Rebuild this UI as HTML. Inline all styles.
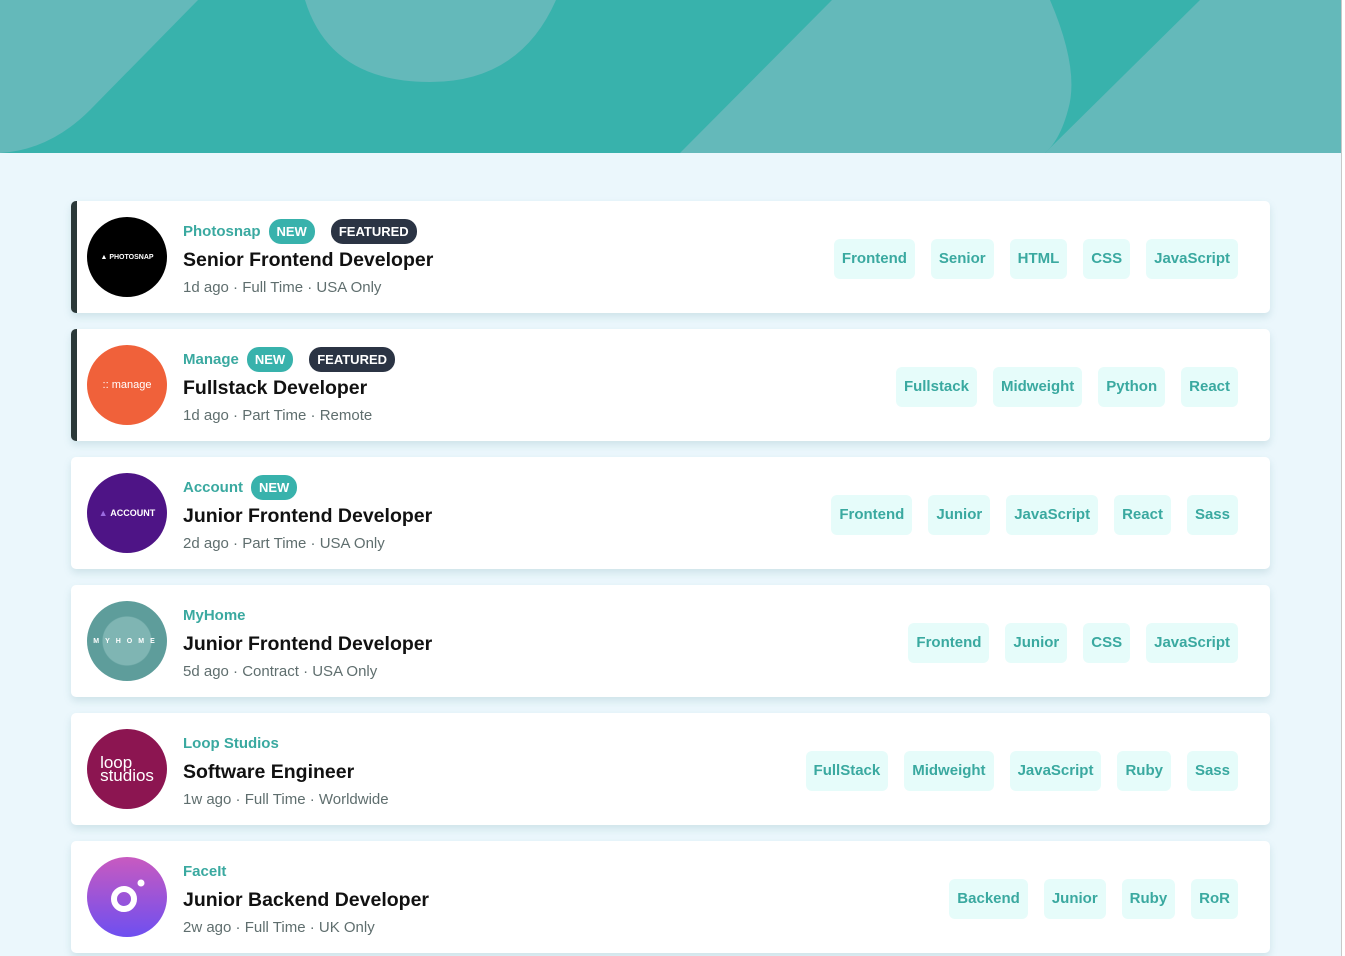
<!DOCTYPE html>
<html><head><meta charset="utf-8"><style>
*{margin:0;padding:0;box-sizing:border-box}
body{width:1345px;height:956px;overflow:hidden;background:#ebf7fc;font-family:"Liberation Sans",sans-serif;position:relative}
.hdr{position:absolute;left:0;top:0;width:1341px;height:153px;background:#38b2ac;overflow:hidden}
.sb{position:absolute;right:0;top:0;width:4px;height:956px;background:#fff;border-left:1px solid #c8c8c8}
.card{position:absolute;left:71px;width:1199px;height:112px;background:#fff;border-radius:5px;box-shadow:0 4px 8px rgba(80,140,150,.18)}
.card.f{border-left:6px solid #2b3939}
.logo{position:absolute;left:16px;top:16px;width:80px;height:80px;border-radius:50%;display:flex;align-items:center;justify-content:center;color:#fff;font-weight:bold}
.f .logo{left:10px}
.info{position:absolute;left:112px;top:18px}
.f .info{left:106px}
.co{color:#3aa9a0;font-weight:bold;font-size:15px;display:flex;align-items:center;height:24px}
.b{display:inline-block;border-radius:12px;color:#fff;font-size:13px;font-weight:bold;height:25px;line-height:25px;padding:0 8px;margin-left:8px}
.new{background:#38b2ac}.feat{background:#2b3444;margin-left:16px}
.ti{font-size:19.5px;font-weight:bold;color:#111;margin-top:6px;height:26px}
.me{font-size:15px;color:#5f6e6e;margin-top:4px}
.tags{position:absolute;right:32px;top:38px;display:flex;gap:16px}
.tags span{background:#e6fcfa;color:#3aa9a0;font-weight:bold;font-size:15px;height:40px;line-height:40px;padding:0 8px;border-radius:6px}
</style></head><body>
<div class="hdr"><svg width="1341" height="153" viewBox="0 0 1341 153">
<path d="M0 0H198L90 110Q50 150 0 153Z" fill="#64b9ba"/>
<path d="M305 0H556Q520 82 430 82Q330 82 305 0Z" fill="#64b9ba"/>
<path d="M832 0H1050Q1080 70 1068 110Q1060 140 1045 153H680Z" fill="#64b9ba"/>
<path d="M1200 0H1341V153H1045Z" fill="#64b9ba"/>
</svg></div>
<div class="sb"></div>

<div class="card f" style="top:201px"><div class="logo" style="background:#000;font-size:7px">▲ PHOTOSNAP</div>
<div class="info"><div class="co">Photosnap<span class="b new">NEW</span><span class="b feat">FEATURED</span></div><div class="ti">Senior Frontend Developer</div><div class="me">1d ago · Full Time · USA Only</div></div>
<div class="tags"><span>Frontend</span><span>Senior</span><span>HTML</span><span>CSS</span><span>JavaScript</span></div></div>

<div class="card f" style="top:329px"><div class="logo" style="background:#f0613a;font-size:11px;font-weight:normal">:: manage</div>
<div class="info"><div class="co">Manage<span class="b new">NEW</span><span class="b feat">FEATURED</span></div><div class="ti">Fullstack Developer</div><div class="me">1d ago · Part Time · Remote</div></div>
<div class="tags"><span>Fullstack</span><span>Midweight</span><span>Python</span><span>React</span></div></div>

<div class="card" style="top:457px"><div class="logo" style="background:#4e1486;font-size:9px"><span style="color:#9b6be0">▲</span>&nbsp;ACCOUNT</div>
<div class="info"><div class="co">Account<span class="b new">NEW</span></div><div class="ti">Junior Frontend Developer</div><div class="me">2d ago · Part Time · USA Only</div></div>
<div class="tags"><span>Frontend</span><span>Junior</span><span>JavaScript</span><span>React</span><span>Sass</span></div></div>

<div class="card" style="top:585px"><div class="logo" style="background:radial-gradient(circle at 50% 50%,#7fb5b3 0 24px,#5e9d9b 25px);font-size:7px;letter-spacing:6px">MYHOME</div>
<div class="info"><div class="co">MyHome</div><div class="ti">Junior Frontend Developer</div><div class="me">5d ago · Contract · USA Only</div></div>
<div class="tags"><span>Frontend</span><span>Junior</span><span>CSS</span><span>JavaScript</span></div></div>

<div class="card" style="top:713px"><div class="logo" style="background:#8c1551;font-size:17px;line-height:13px;text-align:left;font-weight:normal"><div>loop<br>studios</div></div>
<div class="info"><div class="co">Loop Studios</div><div class="ti">Software Engineer</div><div class="me">1w ago · Full Time · Worldwide</div></div>
<div class="tags"><span>FullStack</span><span>Midweight</span><span>JavaScript</span><span>Ruby</span><span>Sass</span></div></div>

<div class="card" style="top:841px"><div class="logo" style="background:linear-gradient(#c85ac0,#6e4ff0)"><svg width="80" height="80"><circle cx="37" cy="42" r="10" fill="none" stroke="#fff" stroke-width="6"/><circle cx="54" cy="26" r="3.5" fill="#fff"/></svg></div>
<div class="info"><div class="co">FaceIt</div><div class="ti">Junior Backend Developer</div><div class="me">2w ago · Full Time · UK Only</div></div>
<div class="tags"><span>Backend</span><span>Junior</span><span>Ruby</span><span>RoR</span></div></div>
</body></html>
